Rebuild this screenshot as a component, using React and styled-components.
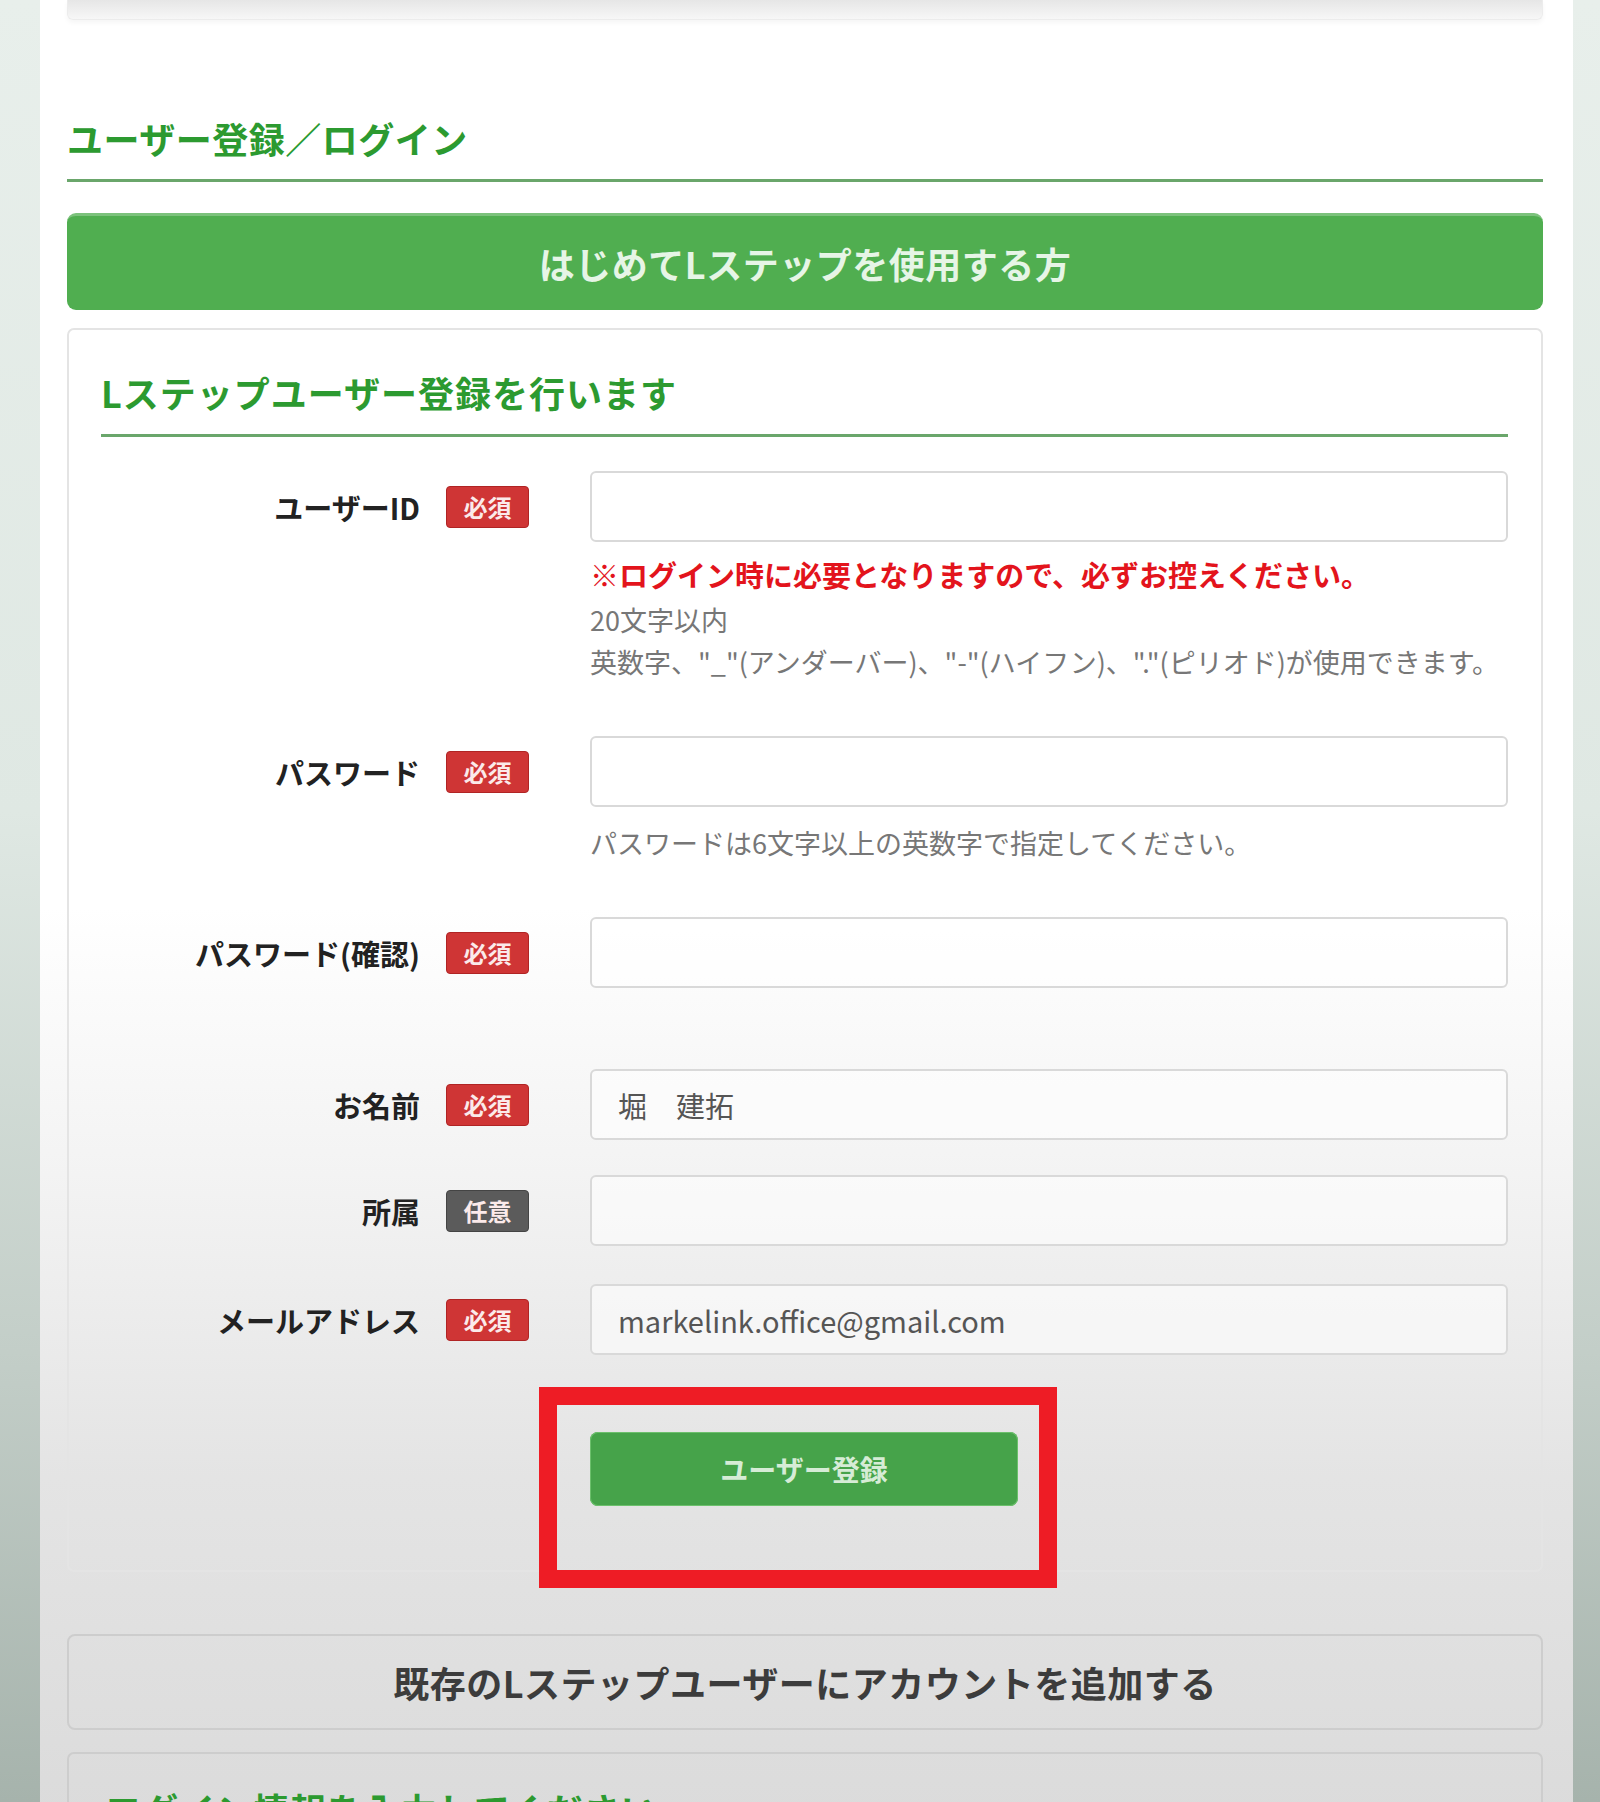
import React from "react";
import styled, { createGlobalStyle } from "styled-components";

const GlobalStyle = createGlobalStyle`
  html, body { margin: 0; padding: 0; }
  body {
    font-family: "Noto Sans CJK JP", "Noto Sans", sans-serif;
    overflow: hidden;
  }
  * { box-sizing: border-box; }
`;

const Screen = styled.div`
  height: 1802px;
  overflow: hidden;
  display: flex;
  align-items: flex-start;
  padding: 0 27px 0 40px;
  background: linear-gradient(to bottom, #e8efeb 0%, #dfe8e3 45%, #c3cec8 75%, #a6b3ac 100%);
`;

const Panel = styled.main`
  flex: 1;
  min-height: 1802px;
  display: flex;
  flex-direction: column;
  padding: 0 30px 0 27px;
  background: linear-gradient(to bottom, #ffffff 0%, #ffffff 48%, #f3f3f3 62%, #e4e4e4 78%, #d9d9d9 100%);
  & > * { flex-shrink: 0; }
`;

const PrevCardEdge = styled.div`
  height: 20px;
  border: 1px solid #ececec;
  border-top: 0;
  border-radius: 0 0 6px 6px;
  background: linear-gradient(to bottom, #e6e6e6, #f7f7f7);
  box-shadow: 0 3px 5px rgba(0, 0, 0, 0.04);
`;

const SectionTitle = styled.h2`
  margin: 98px 0 0;
  padding-bottom: 20px;
  font-size: 36px;
  line-height: 41px;
  font-weight: 700;
  letter-spacing: 0.5px;
  color: #2c9a30;
  border-bottom: 3px solid #6aa66b;
`;

const StartBanner = styled.div`
  margin-top: 31px;
  height: 97px;
  border-radius: 9px;
  background: #50ae50;
  border-top: 3px solid #7cc27c;
  display: flex;
  align-items: center;
  justify-content: center;
  font-size: 36px;
  font-weight: 700;
  color: #e6f5e6;
  letter-spacing: 0.5px;
`;

const Card = styled.section`
  margin-top: ${(p) => p.$top}px;
  border: 2px solid ${(p) => p.$border || "#e4e4e4"};
  border-radius: 7px;
  padding: ${(p) => p.$pad};
`;

const CardTitle = styled.h3`
  margin: 0;
  padding-bottom: 21px;
  font-size: 36px;
  line-height: 41px;
  font-weight: 700;
  letter-spacing: 1px;
  color: #2c9a30;
  border-bottom: ${(p) => (p.$underline ? "3px solid #6aa66b" : "none")};
`;

const Form = styled.div`
  display: flex;
  flex-direction: column;
  margin-top: 34px;
  & > * { flex-shrink: 0; }
`;

const FieldRow = styled.div`
  display: grid;
  grid-template-columns: 489px 1fr;
  margin-top: ${(p) => p.$top || 0}px;
  position: relative;
`;

const LabelCell = styled.div`
  height: 71px;
  display: flex;
  align-items: center;
  justify-content: flex-end;
  padding-right: 61px;
`;

const Label = styled.span`
  font-size: 29px;
  font-weight: 700;
  color: #222;
`;

const Badge = styled.span`
  margin-left: 26px;
  width: 83px;
  height: 42px;
  border-radius: 4px;
  display: flex;
  align-items: center;
  justify-content: center;
  font-size: 24px;
  font-weight: 700;
  color: #fbeaea;
  background: ${(p) => (p.$optional ? "#5b5b5b" : "#cf3535")};
  border: 1px solid ${(p) => (p.$optional ? "#444" : "#b02424")};
`;

const FieldCol = styled.div`
  display: flex;
  flex-direction: column;
`;

const Input = styled.input`
  height: 71px;
  width: 100%;
  border: 2px solid #d9d9d9;
  border-radius: 6px;
  background: rgba(255, 255, 255, 0.55);
  padding: 0 26px;
  font-family: "Noto Sans CJK JP", "Noto Sans", sans-serif;
  font-size: 29px;
  color: #555;
  outline: none;
`;

const Note = styled.p`
  margin: 15px 0 0;
  font-size: 29px;
  line-height: 34px;
  font-weight: 700;
  color: #e3141c;
`;

const Help = styled.p`
  margin: ${(p) => p.$top}px 0 0;
  font-size: 27px;
  line-height: 42px;
  color: #777;
`;

const SubmitWrap = styled.div`
  position: relative;
  width: 428px;
`;

const SubmitButton = styled.button`
  width: 428px;
  height: 74px;
  border: 0;
  border-radius: 8px;
  background: #46a34a;
  box-shadow: 0 0 0 1px #6cc06c inset;
  font-family: "Noto Sans CJK JP", "Noto Sans", sans-serif;
  font-size: 28px;
  font-weight: 700;
  color: #d6ecd6;
  cursor: pointer;
`;

const Highlight = styled.div`
  position: absolute;
  left: -51px;
  top: -45px;
  width: 518px;
  height: 201px;
  border: 18px solid #ee1c25;
  pointer-events: none;
`;

const AddAccount = styled.div`
  margin-top: 62px;
  height: 96px;
  border: 2px solid #cdcdcd;
  border-radius: 8px;
  display: flex;
  align-items: center;
  justify-content: center;
  font-size: 36px;
  font-weight: 700;
  letter-spacing: 0.5px;
  color: #3c3c3c;
`;

const fields = [
  {
    label: "ユーザーID",
    top: 0,
    note: "※ログイン時に必要となりますので、必ずお控えください。",
    help: ["20文字以内", "英数字、\"_\"(アンダーバー)、\"-\"(ハイフン)、\".\"(ピリオド)が使用できます。"],
  },
  { label: "パスワード", top: 53, type: "password", help: ["パスワードは6文字以上の英数字で指定してください。"], helpTop: 15 },
  { label: "パスワード(確認)", top: 53, type: "password" },
  { label: "お名前", top: 81, value: "堀　建拓" },
  { label: "所属", top: 35, optional: true },
  { label: "メールアドレス", top: 38, value: "markelink.office@gmail.com" },
];

export default function App() {
  return (
    <>
      <GlobalStyle />
      <Screen>
        <Panel>
          <PrevCardEdge />
          <SectionTitle>ユーザー登録／ログイン</SectionTitle>
          <StartBanner>はじめてLステップを使用する方</StartBanner>

          <Card $top={18} $pad="42px 33px 64px 32px">
            <CardTitle $underline>Lステップユーザー登録を行います</CardTitle>
            <Form>
              {fields.map((f) => (
                <FieldRow key={f.label} $top={f.top}>
                  <LabelCell>
                    <Label>{f.label}</Label>
                    <Badge $optional={f.optional}>{f.optional ? "任意" : "必須"}</Badge>
                  </LabelCell>
                  <FieldCol>
                    <Input type={f.type || "text"} defaultValue={f.value || ""} />
                    {f.note && <Note>{f.note}</Note>}
                    {f.help &&
                      f.help.map((h, i) => (
                        <Help key={i} $top={i === 0 ? f.helpTop || 8 : 0}>
                          {h}
                        </Help>
                      ))}
                  </FieldCol>
                </FieldRow>
              ))}
              <FieldRow $top={77}>
                <div />
                <SubmitWrap>
                  <SubmitButton type="button">ユーザー登録</SubmitButton>
                  <Highlight />
                </SubmitWrap>
              </FieldRow>
            </Form>
          </Card>

          <AddAccount>既存のLステップユーザーにアカウントを追加する</AddAccount>

          <Card $top={22} $border="#cdcdcd" $pad="35px 33px 40px 36px">
            <CardTitle>ログイン情報を入力してください</CardTitle>
          </Card>
        </Panel>
      </Screen>
    </>
  );
}
